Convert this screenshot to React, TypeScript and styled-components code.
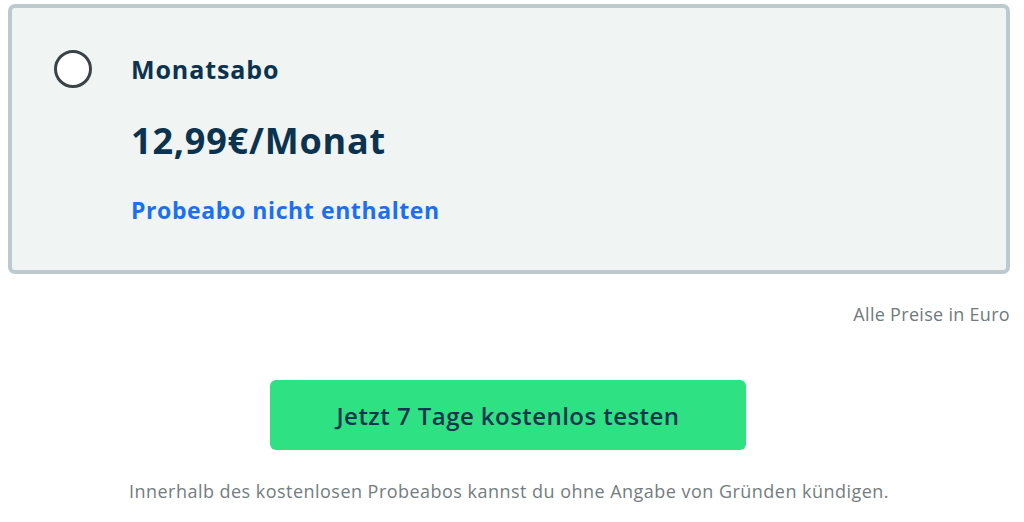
import styled, { createGlobalStyle } from 'styled-components';

const GlobalStyle = createGlobalStyle`
  html, body {
    margin: 0;
    padding: 0;
    background: #ffffff;
    font-family: 'Open Sans', 'Noto Sans', sans-serif;
  }
`;

const Page = styled.div`
  width: 1024px;
  height: 522px;
  padding: 4px 14px 0 8px;
  box-sizing: border-box;
  display: flex;
  flex-direction: column;
`;

const PlanCard = styled.div`
  height: 270px;
  box-sizing: border-box;
  border: 4px solid #bccacf;
  border-radius: 7px;
  background: #f0f4f3;
  display: flex;
  align-items: flex-start;
  padding: 38px 0 0 42px;
  gap: 39px;
`;

const Radio = styled.span`
  width: 38px;
  height: 38px;
  box-sizing: border-box;
  border: 3px solid #3a4447;
  border-radius: 50%;
  background: #ffffff;
  flex-shrink: 0;
  margin-top: 4px;
`;

const PlanInfo = styled.div`
  display: flex;
  flex-direction: column;
`;

const PlanName = styled.div`
  font-size: 25px;
  font-weight: 700;
  letter-spacing: 0.9px;
  color: #0b3350;
  line-height: 46px;
`;

const Price = styled.div`
  font-size: 36px;
  font-weight: 700;
  letter-spacing: 0.8px;
  color: #0b3350;
  line-height: 44px;
  margin-top: 27px;
`;

const Note = styled.div`
  font-size: 23px;
  font-weight: 700;
  letter-spacing: 0.6px;
  color: #1d6ff2;
  line-height: 30px;
  margin-top: 32px;
`;

const PriceHint = styled.div`
  align-self: flex-end;
  font-size: 18px;
  letter-spacing: 0.3px;
  color: #6f7a7d;
  margin-top: 28px;
`;

const CtaButton = styled.button`
  align-self: center;
  margin: 54px 0 0 0;
  width: 476px;
  height: 70px;
  border: none;
  border-radius: 6px;
  background: #2ee283;
  color: #123650;
  font-family: 'Open Sans', 'Noto Sans', sans-serif;
  font-size: 24px;
  font-weight: 600;
  letter-spacing: 0.45px;
  cursor: pointer;
  transform: translateX(-1px);
`;

const Footnote = styled.div`
  align-self: center;
  margin-top: 29px;
  font-size: 18px;
  letter-spacing: 0.47px;
  color: #737d80;
`;

export default function App() {
  return (
    <>
      <GlobalStyle />
      <Page>
        <PlanCard>
          <Radio />
          <PlanInfo>
            <PlanName>Monatsabo</PlanName>
            <Price>12,99€/Monat</Price>
            <Note>Probeabo nicht enthalten</Note>
          </PlanInfo>
        </PlanCard>
        <PriceHint>Alle Preise in Euro</PriceHint>
        <CtaButton>Jetzt 7 Tage kostenlos testen</CtaButton>
        <Footnote>
          Innerhalb des kostenlosen Probeabos kannst du ohne Angabe von Gründen kündigen.
        </Footnote>
      </Page>
    </>
  );
}
